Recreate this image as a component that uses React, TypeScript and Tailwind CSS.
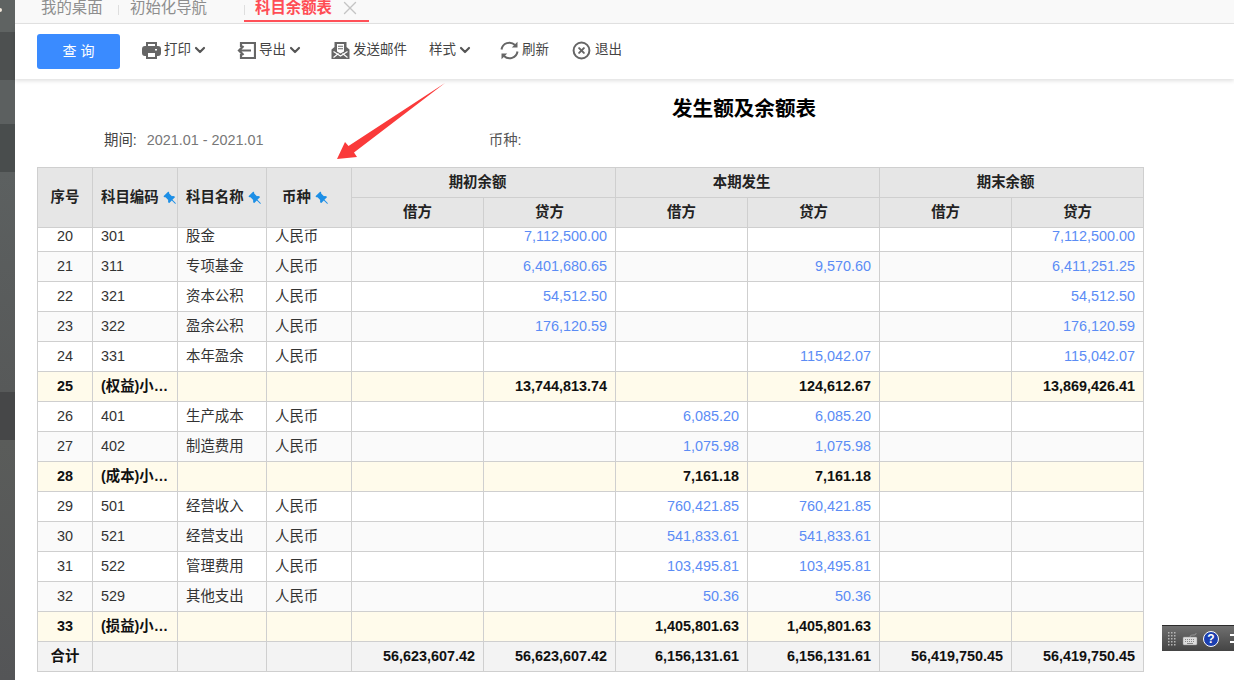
import { BsPinAngleFill } from "react-icons/bs";
import { ChevronDown, CircleX, X } from "lucide-react";

type Row = {
  no: number;
  code: string;
  name?: string;
  vals: string[];
  kind?: "sub" | "alt";
};

const rows: Row[] = [
  { no: 20, code: "301", name: "股金", vals: ["", "7,112,500.00", "", "", "", "7,112,500.00"] },
  { no: 21, code: "311", name: "专项基金", kind: "alt", vals: ["", "6,401,680.65", "", "9,570.60", "", "6,411,251.25"] },
  { no: 22, code: "321", name: "资本公积", vals: ["", "54,512.50", "", "", "", "54,512.50"] },
  { no: 23, code: "322", name: "盈余公积", kind: "alt", vals: ["", "176,120.59", "", "", "", "176,120.59"] },
  { no: 24, code: "331", name: "本年盈余", vals: ["", "", "", "115,042.07", "", "115,042.07"] },
  { no: 25, code: "(权益)小…", kind: "sub", vals: ["", "13,744,813.74", "", "124,612.67", "", "13,869,426.41"] },
  { no: 26, code: "401", name: "生产成本", vals: ["", "", "6,085.20", "6,085.20", "", ""] },
  { no: 27, code: "402", name: "制造费用", kind: "alt", vals: ["", "", "1,075.98", "1,075.98", "", ""] },
  { no: 28, code: "(成本)小…", kind: "sub", vals: ["", "", "7,161.18", "7,161.18", "", ""] },
  { no: 29, code: "501", name: "经营收入", vals: ["", "", "760,421.85", "760,421.85", "", ""] },
  { no: 30, code: "521", name: "经营支出", kind: "alt", vals: ["", "", "541,833.61", "541,833.61", "", ""] },
  { no: 31, code: "522", name: "管理费用", vals: ["", "", "103,495.81", "103,495.81", "", ""] },
  { no: 32, code: "529", name: "其他支出", kind: "alt", vals: ["", "", "50.36", "50.36", "", ""] },
  { no: 33, code: "(损益)小…", kind: "sub", vals: ["", "", "1,405,801.63", "1,405,801.63", "", ""] },
];

const totals = ["56,623,607.42", "56,623,607.42", "6,156,131.61", "6,156,131.61", "56,419,750.45", "56,419,750.45"];

function Cols() {
  return (
    <colgroup>
      <col className="w-[55px]" />
      <col className="w-[85px]" />
      <col className="w-[89px]" />
      <col className="w-[85px]" />
      <col className="w-[132px]" />
      <col className="w-[132px]" />
      <col className="w-[132px]" />
      <col className="w-[132px]" />
      <col className="w-[132px]" />
      <col className="w-[132px]" />
    </colgroup>
  );
}

function Pin() {
  return <BsPinAngleFill className="ml-[4px] inline-block size-[14px] -scale-x-100 text-[#1d8fe6]" />;
}

function PrintIcon() {
  return (
    <svg width="19" height="19" viewBox="0 0 19 19" fill="none" stroke="#666" strokeWidth="2">
      <path d="M5 6V2h9v4" />
      <rect x="1" y="6" width="17" height="8" rx="2" fill="#666" />
      <rect x="5" y="11" width="9" height="6" fill="#fff" />
      <rect x="13" y="8" width="2" height="1.5" fill="#fff" stroke="none" />
    </svg>
  );
}

function ExportIcon() {
  return (
    <svg width="19" height="19" viewBox="0 0 19 19" fill="none" stroke="#666" strokeWidth="2.200">
      <path d="M4 6V2h14v15H4v-4" />
      <path d="M14 9.500H2M6.500 5L2 9.500 6.500 14" />
    </svg>
  );
}

function MailIcon() {
  return (
    <svg width="19" height="19" viewBox="0 0 19 19">
      <path d="M3.500 1h12v5l3 2.500V18H.500V8.500l3-2.500z" fill="#666" />
      <path d="M6 3h7v7.500l-3.500 2L6 10.500z" fill="#fff" />
      <path d="M7 5.200h5M7 7.700h5" stroke="#666" strokeWidth="1.100" />
      <path d="M2.500 10.500l7 4.500 7-4.500M2.500 16.500l5-4M16.500 16.500l-5-4" stroke="#fff" strokeWidth="1.200" fill="none" />
    </svg>
  );
}

function RefreshIcon() {
  return (
    <svg width="19" height="19" viewBox="0 0 19 19" fill="none" stroke="#666" strokeWidth="2">
      <path d="M1.500 8.500A8 8 0 0 1 15 4" />
      <path d="M17.500 10.500A8 8 0 0 1 4 15" />
      <path d="M17.500 .8v5.700h-5.700z" fill="#666" stroke="none" />
      <path d="M1.500 18.200v-5.700h5.700z" fill="#666" stroke="none" />
    </svg>
  );
}

function Chevron() {
  return <ChevronDown className="ml-px size-[16px] text-[#555]" strokeWidth={3.2} />;
}

export default function App() {
  const th = "border border-[#cfcfcf] text-center font-bold text-[#222]";
  const thLeft = "border border-[#cfcfcf] text-left font-bold text-[#222] whitespace-nowrap overflow-hidden";
  const td = "h-[30px] overflow-hidden whitespace-nowrap border border-[#cfcfcf] p-0";
  return (
    <div
      className="relative flex h-[680px] w-[1234px] overflow-hidden bg-white text-[14.4px] text-[#333]"
      style={{ fontFamily: '"Liberation Sans", "Noto Sans CJK SC", sans-serif' }}
    >
      {/* left edge of the nav, mostly cropped */}
      <div className="flex w-[15px] shrink-0 flex-col">
        <div className="relative h-[32px] bg-[#5f6362]">
          <div className="absolute left-[-2px] top-[8px] size-[4px] rounded-full bg-[#f4e9dc]" />
        </div>
        <div className="h-[48px] bg-[#4d5050]" />
        <div className="h-[44px] bg-[#5c6060]" />
        <div className="h-[48px] bg-[#494d4d]" />
        <div className="h-[220px] bg-gradient-to-b from-[#5c6060] to-[#575959]" />
        <div className="h-[48px] bg-[#464748]" />
        <div className="flex-1 bg-gradient-to-b from-[#5a5c5a] to-[#545557]" />
      </div>

      <div className="flex min-w-0 flex-1 flex-col">
        <div className="flex h-[24px] shrink-0 border-b border-[#e3e3e3] bg-[#f9f9f9] text-[15.4px] leading-[16px]">
          <div className="ml-[26px] w-[77px] text-[#8e8e8e]">我的桌面</div>
          <div className="my-[5px] h-[10px] w-px bg-[#dedede]" />
          <div className="ml-[11px] w-[114px] text-[#8e8e8e]">初始化导航</div>
          <div className="relative flex h-[22px] w-[125px] items-start border-b-2 border-[#ff5158] pl-[11px] font-bold text-[#ff4d55]">
            <div className="absolute left-0 top-[5px] h-[10px] w-px bg-[#dedede]" />
            <span>科目余额表</span>
            <X className="ml-[7px] -mt-[3px] size-[22px] text-[#c4c4c4]" strokeWidth={1.5} />
          </div>
        </div>

        <div className="relative z-10 flex h-[55px] shrink-0 items-center bg-white pb-[3px] text-[13.500px] leading-[18px] text-[#444] shadow-[0_2px_4px_rgba(0,0,0,0.12)]">
          <button className="ml-[22px] mt-[3px] h-[35px] w-[83px] rounded-[3px] bg-[#3a8bff] pb-[2px] text-[14px] text-white">查 询</button>
          <div className="ml-[22px] flex items-center gap-[3px]"><PrintIcon /><span>打印</span></div>
          <Chevron />
          <div className="ml-[29px] flex items-center gap-[3px]"><ExportIcon /><span>导出</span></div>
          <Chevron />
          <div className="ml-[28px] flex items-center gap-[3px]"><MailIcon /><span>发送邮件</span></div>
          <span className="ml-[22px]">样式</span>
          <Chevron />
          <div className="ml-[27px] flex items-center gap-[3px]">
            <RefreshIcon />
            <span>刷新</span>
          </div>
          <div className="ml-[23px] flex items-center gap-[4px]">
            <CircleX className="size-[19px] text-[#666]" strokeWidth={2.5} />
            <span>退出</span>
          </div>
        </div>

        <div className="flex min-h-0 flex-1 flex-col pl-[22px]">
          <div className="mt-[16px] h-[28px] pl-[635px] text-[20.600px] font-bold leading-[28px] text-black">发生额及余额表</div>
          <div className="mt-[7px] flex h-[20px] items-center leading-[20px] text-[#555]">
            <span className="ml-[67px] text-[#444]">期间:</span>
            <span className="ml-[10px] w-[342px] text-[#777]">2021.01 - 2021.01</span>
            <span className="text-[#555]">币种:</span>
          </div>

          <table className="mt-[17px] w-[1107px] shrink-0 table-fixed border-collapse">
            <Cols />
            <thead>
              <tr className="h-[30px] bg-[#e6e6e6]">
                <th rowSpan={2} className={th}>序号</th>
                <th rowSpan={2} className={`${thLeft} pl-[8px]`}>科目编码<Pin /></th>
                <th rowSpan={2} className={`${thLeft} pl-[8px]`}>科目名称<Pin /></th>
                <th rowSpan={2} className={`${thLeft} pl-[15px]`}>币种<Pin /></th>
                <th colSpan={2} className={`${th} pr-[12px]`}>期初余额</th>
                <th colSpan={2} className={`${th} pr-[12px]`}>本期发生</th>
                <th colSpan={2} className={`${th} pr-[12px]`}>期末余额</th>
              </tr>
              <tr className="h-[30px] bg-[#e6e6e6]">
                {["借方", "贷方", "借方", "贷方", "借方", "贷方"].map((t, i) => (
                  <th key={i} className={th}>{t}</th>
                ))}
              </tr>
            </thead>
          </table>

          <div className="h-[444px] w-[1108px] shrink-0 overflow-hidden">
            <table className="-mt-[7px] w-[1107px] table-fixed border-collapse">
              <Cols />
              <tbody>
                {rows.map((r) => {
                  const sub = r.kind === "sub";
                  const bg = sub ? "bg-[#fffbeb]" : r.kind === "alt" ? "bg-[#fafafa]" : "bg-white";
                  return (
                    <tr key={r.no} className={bg}>
                      <td className={`${td} text-center ${sub ? "font-bold text-[#111]" : ""}`}>{r.no}</td>
                      <td className={`${td} pl-[8px] ${sub ? "font-bold text-[#111]" : ""}`}>{r.code}</td>
                      <td className={`${td} pl-[8px]`}>{r.name}</td>
                      <td className={`${td} pl-[8px]`}>{r.name ? "人民币" : ""}</td>
                      {r.vals.map((v, i) => (
                        <td key={i} className={`${td} pr-[8px] text-right ${sub ? "font-bold text-[#111]" : "text-[#5b8cf5]"}`}>{v}</td>
                      ))}
                    </tr>
                  );
                })}
                <tr className="bg-[#f3f3f3]">
                  <td className={`${td} text-center font-bold text-[#111]`}>合计</td>
                  <td className={td} />
                  <td className={td} />
                  <td className={td} />
                  {totals.map((v, i) => (
                    <td key={i} className={`${td} pr-[8px] text-right font-bold text-[#111]`}>{v}</td>
                  ))}
                </tr>
              </tbody>
            </table>
          </div>
        </div>
      </div>

      {/* red annotation arrow drawn over the screenshot */}
      <svg className="pointer-events-none absolute left-[330px] top-[78px] z-20" width="120" height="85" viewBox="330 78 120 85">
        <path d="M337 159L345 142 348.500 146 445 83 354 152.500 357 157z" fill="#fa3a3a" />
      </svg>

      {/* floating input-method bar */}
      <div className="absolute left-[1162px] top-[625px] z-20 flex h-[26px] w-[72px] items-center border-t border-[#2b2b2b] bg-gradient-to-b from-[#707070] to-[#444] pl-[5px]">
        <svg width="10" height="14" viewBox="0 0 10 14" fill="#b5b5b5">
          {[1, 4, 7, 10, 13].flatMap((y) =>
            [1, 4, 7].map((x) => <rect key={`${x}-${y}`} x={x} y={y - 1} width="1.500" height="1.500" />)
          )}
        </svg>
        <svg className="ml-[5px]" width="16" height="14" viewBox="0 0 16 14">
          <path d="M8 5c0-2 2-2 4-2s2-1 2-2" stroke="#999" fill="none" />
          <rect x="1" y="5" width="14" height="8" rx="1" fill="#ddd" stroke="#888" strokeWidth="0.500" />
          <path d="M3 7.500h10M3 9.500h10" stroke="#888" strokeDasharray="1 1" />
          <path d="M5 11.500h6" stroke="#888" />
        </svg>
        <div className="ml-[5px] flex size-[16px] items-center justify-center rounded-full border border-white bg-[#1c3fb0] text-[12px] font-bold leading-none text-white">?</div>
        <div className="ml-auto flex w-[4px] flex-col gap-[5px]">
          <div className="h-[2px] w-[4px] bg-white" />
          <div className="h-[2px] w-[4px] bg-white" />
        </div>
      </div>
    </div>
  );
}
